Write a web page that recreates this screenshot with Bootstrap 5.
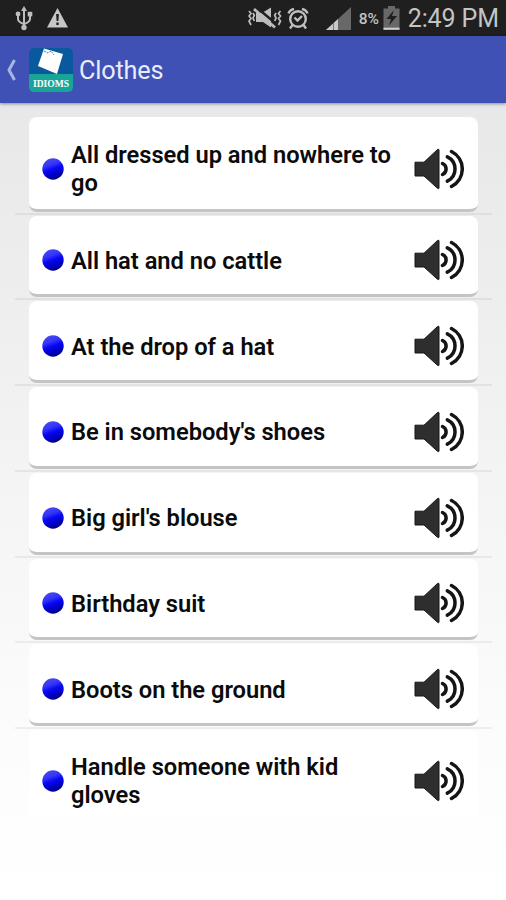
<!DOCTYPE html>
<html lang="en">
<head>
<meta charset="utf-8">
<meta name="viewport" content="width=device-width, initial-scale=1">
<title>Clothes</title>
<link href="https://cdn.jsdelivr.net/npm/bootstrap@5.3.0/dist/css/bootstrap.min.css" rel="stylesheet">
<style>
body{font-family:Roboto,"Liberation Sans",sans-serif;height:900px;overflow:hidden;background:#fff}
.status{height:36px;background:#1f1f1f;color:#c4c4c4;padding:0 7px 0 14px}
.status svg,.appbar svg,.idiom svg{display:block;flex:none}
.clock{font-size:25px;line-height:37px;padding-top:1px;letter-spacing:-.1px}
.pct{font-size:15.5px;line-height:38px;padding-top:1px;letter-spacing:-.2px;font-weight:500;margin-left:7px}
.warn{margin-left:13px}
.alarm{margin-left:5px}
.signal{margin-left:17px}
.logo{margin-left:11px;overflow:visible!important}
.appbar{height:67px;background:#3f51b5;color:#e9ecfa;padding-left:6px;box-shadow:0 1px 3px rgba(0,0,0,.4);position:relative}
.appbar h1{font-size:25.2px;line-height:67px;font-weight:400;letter-spacing:-.15px;margin:2px 0 0 6px}
.page-area{height:797px;background:linear-gradient(#e8e8e8 0,#eee 25%,#f6f6f6 55%,#fcfcfc 80%,#fff 100%);padding:14px 14px 0 15px}
.item{height:85.75px;padding:1px 14px 1px 14px;border-bottom:2px solid rgba(0,0,0,.055)}
.item.tall{height:97.5px;padding-top:0}
.item.end{height:88px;padding-bottom:0;border:0}
.idiom{height:100%;background:#fff;border-radius:8px;border-bottom:3px solid #c4c4c4;padding:11px 14px 0 13px}
.tall .idiom{padding-top:12px}
.end .idiom{border:0;padding-top:14px;border-radius:8px 8px 0 0}
.phrase{font-size:23.7px;line-height:28px;font-weight:600;color:#0b0b0b;margin-left:7px;width:340px;padding-top:1px;letter-spacing:-.02px}
.tall .phrase,.end .phrase{padding-top:1px}
</style>
</head>
<body>
<svg width="0" height="0" class="position-absolute">
  <defs>
    <linearGradient id="blue" x1=".3" y1="0" x2=".65" y2="1"><stop offset="0" stop-color="#4a4af0"/><stop offset=".3" stop-color="#3434fa"/><stop offset=".5" stop-color="#0808f4"/><stop offset=".75" stop-color="#0000c4"/><stop offset="1" stop-color="#000078"/></linearGradient>
    <symbol id="ball" viewBox="0 0 22 22"><circle cx="11" cy="11" r="10.7" fill="url(#blue)"/></symbol>
    <symbol id="speaker" viewBox="0 0 50 42">
      <path d="M1 14.2H10L23.5 1.5Q25 .6 25 2V40Q25 41.2 23.5 40.3L10 28H1Z" fill="#2e2e2e" stroke="#151515"/>
      <g fill="none" stroke="#151515" stroke-width="3.5" stroke-linecap="round"><path d="M28.5 15.5A6 6 0 0 1 28.5 26.5"/><path d="M33.3 8.8A13.5 13.5 0 0 1 33.3 33.2"/><path d="M37.500 3.5A19.6 19.6 0 0 1 37.500 38.5"/></g>
    </symbol>
  </defs>
</svg>
<header>
  <div class="status d-flex align-items-center">
    <svg width="20" height="26" viewBox="0 0 20 26" fill="none" stroke="#bdbdbd" stroke-width="2"><path d="M10 5V22M4 9V14Q4 17 10 19Q16 17 16 14V9"/><g fill="#bdbdbd" stroke="none"><path d="M10 1L13 6H7Z"/><circle cx="4" cy="9" r="2.4"/><path d="M13.7 6.8H18.3V11.4H13.7Z"/><circle cx="10" cy="22.5" r="2.7"/></g></svg>
    <svg class="warn me-auto" width="21" height="20" viewBox="0 0 21 20"><path d="M10.5 0L21 19.5H0Z" fill="#c6c6c6"/><path d="M9.1 6H11.9L11.4 13H9.6ZM9.3 14.5H11.7V17H9.3Z" fill="#1f1f1f"/></svg>
    <svg width="34" height="22" viewBox="0 0 34 22" fill="none" stroke="#bdbdbd"><path d="M8 6H14L23 .5V20.500L15 15H8Z" fill="#bdbdbd" stroke="none"/><path d="M8 0L29 17.500" stroke="#1f1f1f" stroke-width="2.500"/><path d="M6 2L27 20.500" stroke-width="2.800"/><path d="M4.500 14L2 12" stroke="none"/><path d="M1 4L3 6.500L1 9L3 11.500L1 14L3 18M5 6L6.300 8.500L5 11L6.300 14M32.500 4L30.500 6.500L32.500 9L30.500 11.500L32.500 14L30.500 18M28 6L26.700 8.500L28 11L26.700 14" stroke-width="1.700"/></svg>
    <svg class="alarm" width="22" height="23" viewBox="0 0 22 23" fill="none" stroke="#c1c1c1" stroke-width="2.4"><circle cx="11" cy="12" r="7.8"/><path d="M1.500 6.500Q2.500 3 7 2M20.500 6.500Q19.500 3 15 2M5.500 18L3 21.500M16.500 18L19 21.500M7.500 10.500L10.500 13.500L15 9"/></svg>
    <svg class="signal" width="25" height="25" viewBox="0 0 25 25"><path d="M25 1V24H0Z" fill="#686868"/><path d="M12 12.960V24H0Z" fill="#c8c8c8"/><path d="M7.500 17V24" stroke="#777"/></svg>
    <span class="pct ms-2">8%</span>
    <svg class="ms-1" width="17" height="24" viewBox="0 0 17 24"><path d="M5 0H12V2.500H16.500V24H.5V2.500H5Z" fill="#686868"/><path d="M11 4L3.500 13H8L6 19.500L14 10H9Z" fill="#1f1f1f"/><path d="M.5 22.700H16.500" stroke="#d0d0d0" stroke-width="2"/></svg>
    <span class="clock ms-2">2:49 PM</span>
  </div>
  <div class="appbar d-flex align-items-center">
    <svg width="12" height="22" viewBox="0 0 12 22"><path d="M8.500 1L3 11L8.500 21" fill="none" stroke="#a9b3e4" stroke-width="3"/></svg>
    <svg class="logo" width="44" height="44" viewBox="0 0 44 44"><rect width="44" height="44" rx="5" fill="#08599e"/><path d="M0 26H44V39Q44 44 39 44H5Q0 44 0 39Z" fill="#17a598"/><path d="M15 .5L34 6L28 26L9 18Z" fill="#fff"/><path d="M15 3L19 5L22 3L25 7" stroke="#397bb3" fill="none" stroke-dasharray="2 1"/><text x="22" y="38.500" text-anchor="middle" textLength="36" lengthAdjust="spacingAndGlyphs" font-family="Liberation Serif,serif" font-weight="700" font-size="11" fill="#fff">IDIOMS</text></svg>
    <h1>Clothes</h1>
  </div>
</header>
<main class="page-area">
  <ul class="list-unstyled m-0">
    <li class="item tall"><div class="idiom d-flex align-items-center"><svg width="22" height="22"><use href="#ball"/></svg><span class="phrase">All dressed up and nowhere to go</span><svg class="ms-auto" width="50" height="42"><use href="#speaker"/></svg></div></li>
    <li class="item"><div class="idiom d-flex align-items-center"><svg width="22" height="22"><use href="#ball"/></svg><span class="phrase">All hat and no cattle</span><svg class="ms-auto" width="50" height="42"><use href="#speaker"/></svg></div></li>
    <li class="item"><div class="idiom d-flex align-items-center"><svg width="22" height="22"><use href="#ball"/></svg><span class="phrase">At the drop of a hat</span><svg class="ms-auto" width="50" height="42"><use href="#speaker"/></svg></div></li>
    <li class="item"><div class="idiom d-flex align-items-center"><svg width="22" height="22"><use href="#ball"/></svg><span class="phrase">Be in somebody's shoes</span><svg class="ms-auto" width="50" height="42"><use href="#speaker"/></svg></div></li>
    <li class="item"><div class="idiom d-flex align-items-center"><svg width="22" height="22"><use href="#ball"/></svg><span class="phrase">Big girl's blouse</span><svg class="ms-auto" width="50" height="42"><use href="#speaker"/></svg></div></li>
    <li class="item"><div class="idiom d-flex align-items-center"><svg width="22" height="22"><use href="#ball"/></svg><span class="phrase">Birthday suit</span><svg class="ms-auto" width="50" height="42"><use href="#speaker"/></svg></div></li>
    <li class="item"><div class="idiom d-flex align-items-center"><svg width="22" height="22"><use href="#ball"/></svg><span class="phrase">Boots on the ground</span><svg class="ms-auto" width="50" height="42"><use href="#speaker"/></svg></div></li>
    <li class="item end"><div class="idiom d-flex align-items-center"><svg width="22" height="22"><use href="#ball"/></svg><span class="phrase">Handle someone with kid gloves</span><svg class="ms-auto" width="50" height="42"><use href="#speaker"/></svg></div></li>
  </ul>
</main>
<script src="https://cdn.jsdelivr.net/npm/bootstrap@5.3.0/dist/js/bootstrap.bundle.min.js"></script>
</body>
</html>
